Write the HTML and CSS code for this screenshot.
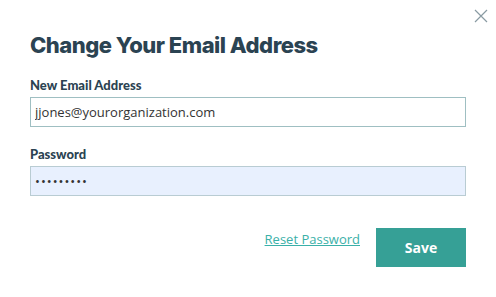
FILE: index.html
```html
<!DOCTYPE html>
<html lang="en">
<head>
    <meta charset="UTF-8">
    <meta name="viewport" content="width=device-width, initial-scale=1.0">
    <title>Change Your Email Address</title>
    <link rel="stylesheet" href="styles.css">
</head>
<body>

    <div class="modal">
        <button class="close-btn" type="button" aria-label="Close">
            <svg width="14" height="14" viewBox="0 0 14 14">
                <path d="M1 1 L13 13 M13 1 L1 13" stroke="#8a9ba3" stroke-width="1.2" fill="none"/>
            </svg>
        </button>

        <h1 class="modal-title">Change Your Email Address</h1>

        <form class="email-form">
            <label class="field-label" for="newEmail">New Email Address</label>
            <input type="email" id="newEmail" class="field-input" value="jjones@yourorganization.com">

            <label class="field-label" for="password">Password</label>
            <input type="password" id="password" class="field-input autofilled" value="password1">

            <div class="form-actions">
                <a href="#" class="reset-link">Reset Password</a>
                <button type="button" class="save-btn">Save</button>
            </div>
        </form>
    </div>

</body>
</html>
```

FILE: styles.css
```css
body {
    margin: 0;
    padding: 0;
    background-color: white;
    font-family: 'Open Sans', 'Noto Sans', sans-serif;
    color: #2b4352;
}
.modal {
    position: relative;
    padding: 30px 30px 0 30px;
}
.close-btn {
    position: absolute;
    top: 9px;
    right: 8px;
    background: none;
    border: none;
    padding: 0;
    cursor: pointer;
}
.modal-title {
    font-family: 'Inter', sans-serif;
    font-weight: 800;
    font-size: 22px;
    margin: 0 0 17px 0;
    line-height: 30px;
    letter-spacing: -0.5px;
}
.email-form {
    display: flex;
    flex-direction: column;
}
.field-label {
    font-family: 'Lato', sans-serif;
    font-weight: 900;
    font-size: 13px;
    line-height: 16px;
    margin-bottom: 4px;
}
.field-input {
    box-sizing: border-box;
    height: 30px;
    border: 1px solid #9fbfc2;
    padding: 0 4px;
    font-family: 'Open Sans', sans-serif;
    font-size: 13px;
    color: #333;
    margin-bottom: 19px;
    outline: none;
}
.field-input.autofilled {
    background-color: #e8f0fe;
    border-color: #b9ccd3;
    letter-spacing: 1px;
    margin-bottom: 32px;
}
.form-actions {
    display: flex;
    justify-content: flex-end;
    align-items: center;
    gap: 16px;
}
.reset-link {
    color: #3ab0a8;
    font-size: 13px;
    margin-top: -18px;
}
.save-btn {
    width: 90px;
    height: 39px;
    background-color: #36a096;
    color: white;
    border: none;
    font-family: 'Open Sans', sans-serif;
    font-weight: 700;
    font-size: 14px;
    cursor: pointer;
}
```
